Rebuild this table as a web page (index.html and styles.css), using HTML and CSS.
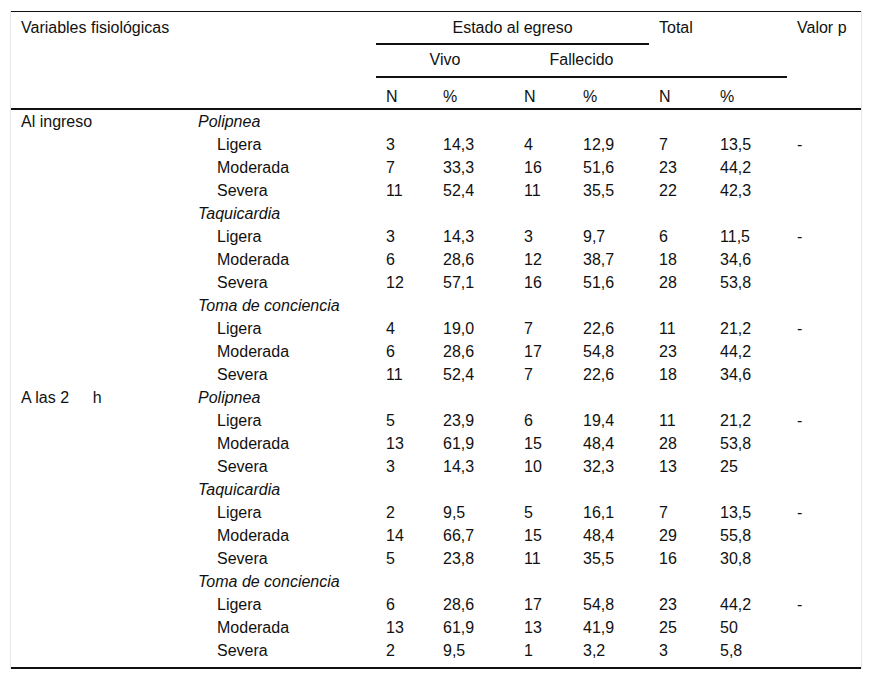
FILE: index.html
```html
<!DOCTYPE html>
<html lang="es">
<head>
<meta charset="utf-8">
<title>Variables fisiológicas</title>
<link rel="stylesheet" href="styles.css">
</head>
<body>
<div class="wrap">
<table class="tbl">
<colgroup>
<col class="c1"><col class="c2"><col class="c3"><col class="c4"><col class="c5"><col class="c6"><col class="c7"><col class="c8"><col class="c9">
</colgroup>
<thead>
<tr class="h1">
<th colspan="2" rowspan="3" class="rb">Variables fisiológicas</th>
<th colspan="4" class="center line">Estado al egreso</th>
<th colspan="2" rowspan="2" class="line">Total</th>
<th rowspan="3" class="rb">Valor p</th>
</tr>
<tr class="h2">
<th colspan="2" class="center line">Vivo</th>
<th colspan="2" class="center line">Fallecido</th>
</tr>
<tr class="h3">
<th class="line">N</th><th class="line">%</th><th class="line">N</th><th class="line">%</th><th class="line">N</th><th class="line">%</th>
</tr>
</thead>
<tbody>
<tr><td>Al ingreso</td><td class="cat">Polipnea</td><td></td><td></td><td></td><td></td><td></td><td></td><td></td></tr>
<tr><td></td><td class="sub">Ligera</td><td>3</td><td>14,3</td><td>4</td><td>12,9</td><td>7</td><td>13,5</td><td>-</td></tr>
<tr><td></td><td class="sub">Moderada</td><td>7</td><td>33,3</td><td>16</td><td>51,6</td><td>23</td><td>44,2</td><td></td></tr>
<tr><td></td><td class="sub">Severa</td><td>11</td><td>52,4</td><td>11</td><td>35,5</td><td>22</td><td>42,3</td><td></td></tr>
<tr><td></td><td class="cat">Taquicardia</td><td></td><td></td><td></td><td></td><td></td><td></td><td></td></tr>
<tr><td></td><td class="sub">Ligera</td><td>3</td><td>14,3</td><td>3</td><td>9,7</td><td>6</td><td>11,5</td><td>-</td></tr>
<tr><td></td><td class="sub">Moderada</td><td>6</td><td>28,6</td><td>12</td><td>38,7</td><td>18</td><td>34,6</td><td></td></tr>
<tr><td></td><td class="sub">Severa</td><td>12</td><td>57,1</td><td>16</td><td>51,6</td><td>28</td><td>53,8</td><td></td></tr>
<tr><td></td><td class="cat">Toma de conciencia</td><td></td><td></td><td></td><td></td><td></td><td></td><td></td></tr>
<tr><td></td><td class="sub">Ligera</td><td>4</td><td>19,0</td><td>7</td><td>22,6</td><td>11</td><td>21,2</td><td>-</td></tr>
<tr><td></td><td class="sub">Moderada</td><td>6</td><td>28,6</td><td>17</td><td>54,8</td><td>23</td><td>44,2</td><td></td></tr>
<tr><td></td><td class="sub">Severa</td><td>11</td><td>52,4</td><td>7</td><td>22,6</td><td>18</td><td>34,6</td><td></td></tr>
<tr><td>A las 2&emsp;&nbsp;&#8201;h</td><td class="cat">Polipnea</td><td></td><td></td><td></td><td></td><td></td><td></td><td></td></tr>
<tr><td></td><td class="sub">Ligera</td><td>5</td><td>23,9</td><td>6</td><td>19,4</td><td>11</td><td>21,2</td><td>-</td></tr>
<tr><td></td><td class="sub">Moderada</td><td>13</td><td>61,9</td><td>15</td><td>48,4</td><td>28</td><td>53,8</td><td></td></tr>
<tr><td></td><td class="sub">Severa</td><td>3</td><td>14,3</td><td>10</td><td>32,3</td><td>13</td><td>25</td><td></td></tr>
<tr><td></td><td class="cat">Taquicardia</td><td></td><td></td><td></td><td></td><td></td><td></td><td></td></tr>
<tr><td></td><td class="sub">Ligera</td><td>2</td><td>9,5</td><td>5</td><td>16,1</td><td>7</td><td>13,5</td><td>-</td></tr>
<tr><td></td><td class="sub">Moderada</td><td>14</td><td>66,7</td><td>15</td><td>48,4</td><td>29</td><td>55,8</td><td></td></tr>
<tr><td></td><td class="sub">Severa</td><td>5</td><td>23,8</td><td>11</td><td>35,5</td><td>16</td><td>30,8</td><td></td></tr>
<tr><td></td><td class="cat">Toma de conciencia</td><td></td><td></td><td></td><td></td><td></td><td></td><td></td></tr>
<tr><td></td><td class="sub">Ligera</td><td>6</td><td>28,6</td><td>17</td><td>54,8</td><td>23</td><td>44,2</td><td>-</td></tr>
<tr><td></td><td class="sub">Moderada</td><td>13</td><td>61,9</td><td>13</td><td>41,9</td><td>25</td><td>50</td><td></td></tr>
<tr class="last"><td></td><td class="sub">Severa</td><td>2</td><td>9,5</td><td>1</td><td>3,2</td><td>3</td><td>5,8</td><td></td></tr>
</tbody>
</table>
</div>
</body>
</html>
```
FILE: styles.css
```css
html, body {
  margin: 0;
  padding: 0;
  background: #fff;
}
body {
  font-family: "Liberation Sans", Arial, sans-serif;
  font-size: 16px;
  color: #111;
}
.wrap {
  margin: 11px 0 0 10px;
  width: 850px;
  border-left: 1px solid #e6e6e6;
  border-right: 1px solid #e6e6e6;
}
.tbl {
  width: 850px;
  table-layout: fixed;
  border-collapse: separate;
  border-spacing: 0;
  border-top: 1px solid #111;
  border-bottom: 2px solid #111;
}
.c1 { width: 177px; }
.c2 { width: 188px; }
.c3 { width: 57px; }
.c4 { width: 81px; }
.c5 { width: 59px; }
.c6 { width: 76px; }
.c7 { width: 61px; }
.c8 { width: 77px; }
.c9 { width: 74px; }
th, td {
  padding: 0 0 0 10px;
  text-align: left;
  font-weight: normal;
  white-space: nowrap;
  vertical-align: top;
}
th {
  line-height: 20px;
}
th.center {
  text-align: center;
  padding-left: 0;
}
.h1 th { padding-top: 6px; padding-bottom: 5px; }
.h2 th { padding-top: 5px; padding-bottom: 6px; }
.h3 th { padding-top: 9px; padding-bottom: 1px; }
th.line { border-bottom: 2px solid #111; }
th.rb { border-bottom: 2px solid #111; }
td {
  line-height: 23px;
  height: 23px;
}
td.cat { font-style: italic; }
td.sub { padding-left: 29px; }
.last td { padding-bottom: 5px; }
```
